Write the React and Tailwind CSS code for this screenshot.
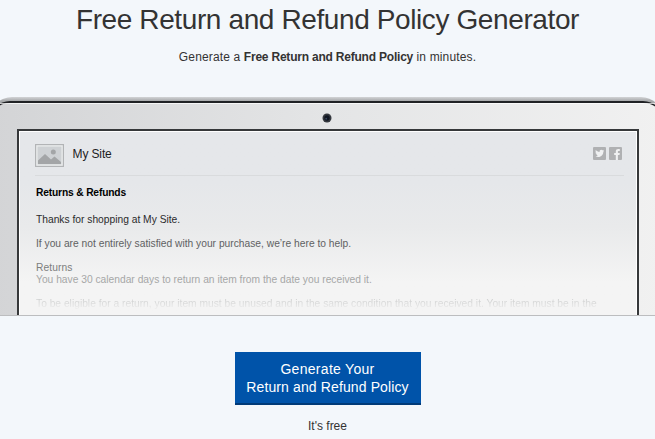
const policy = [
	{
		text: "Returns & Refunds",
		className: "mt-[10px] font-bold text-black tracking-[-0.17px]",
	},
	{
		text: "Thanks for shopping at My Site.",
		className: "mt-[14px] text-[#2b2b2c]",
	},
	{
		text: "If you are not entirely satisfied with your purchase, we’re here to help.",
		className: "mt-[11px] text-[#606162]",
	},
	{
		text: "Returns",
		className: "mt-[11px] text-[#7c7d7d] tracking-[0.1px]",
	},
	{
		text: "You have 30 calendar days to return an item from the date you received it.",
		className: "-mt-px text-[#a6a7a7]",
	},
	{
		text: "To be eligible for a return, your item must be unused and in the same condition that you received it. Your item must be in the",
		className:
			"mt-[11px] bg-gradient-to-b from-[#cfd0d0] from-20% to-[#f0f0f0] bg-clip-text text-transparent",
	},
];

export default function App() {
	return (
		<div className="flex h-[439px] w-[655px] flex-col items-center overflow-hidden bg-[#f3f7fb] font-['Liberation_Sans',Arial,sans-serif] text-[#333]">
			<h1 className="mt-[3px] h-[34px] whitespace-nowrap text-[28px] leading-[34px] tracking-[-0.39px]">
				Free Return and Refund Policy Generator
			</h1>
			<p className="mt-3 h-4 whitespace-nowrap text-[12px] leading-4 tracking-[0.14px]">
				Generate a{" "}
				<b className="tracking-[-0.21px]">Free Return and Refund Policy</b> in
				minutes.
			</p>
			<Laptop />
			<button className="mt-9 h-[53px] w-[186px] shrink-0 border-b-2 border-[#003a78] bg-[#0053a9] text-[14px] leading-[18px] tracking-[0.12px] text-white">
				<span className="tracking-[0.3px]">Generate Your</span>
				<br />
				Return and Refund Policy
			</button>
			<p className="mt-[13px] text-[12px] leading-4">It's free</p>
		</div>
	);
}

function Laptop() {
	return (
		<div className="mt-8 h-[219px] w-full shrink-0 overflow-hidden border-b border-[#bcbdbf]">
			<div className="-mr-2 -ml-[10px] h-[260px] rounded-t-[22px] bg-gradient-to-b from-[#d2d4d6] to-[#a6a8aa] to-[4px] pt-[4px]">
				<div className="h-full rounded-t-[20px] border-t-2 border-[#202225] bg-gradient-to-r from-[#d3d4d6] via-[#e4e5e6] to-[#f1f1f1]">
					<div className="flex h-[26px] items-center justify-center border-t border-white/70 pt-[3px] pl-[1px]">
						<Camera />
					</div>
					<Screen />
				</div>
			</div>
		</div>
	);
}

function Camera() {
	return (
		<svg className="h-[10px] w-[10px]" viewBox="0 0 10 10">
			<circle cx="5" cy="5" r="4.5" fill="#34383e" />
			<circle cx="5" cy="5" r="2.7" fill="#101622" />
			<circle cx="4.2" cy="5.7" r="0.9" fill="#39495f" />
		</svg>
	);
}

function Screen() {
	return (
		<div className="mr-6 ml-[27px] h-[230px] border-2 border-[#36383a]">
			<div className="h-full border border-white bg-gradient-to-b from-[#e5e7ea] from-[50px] via-[#e9eaeb] via-[95px] to-[#f4f4f4] to-[150px] pr-3 pl-[15px]">
				<header className="flex h-11 items-center border-b border-[#d9dbdd] pt-[3px]">
					<Picture />
					<span className="ml-[8.5px] -mt-[3px] text-[12px] tracking-[-0.12px] text-[#1d1d1e]">
						My Site
					</span>
					<div className="-mt-[4px] mr-[2px] ml-auto flex gap-[3px]">
						<Twitter />
						<Facebook />
					</div>
				</header>
				<div className="pl-[1px] text-[10.25px] leading-[13px] whitespace-nowrap">
					{policy.map(line => (
						<p key={line.text} className={`w-fit ${line.className}`}>
							{line.text}
						</p>
					))}
				</div>
			</div>
		</div>
	);
}

function Picture() {
	return (
		<svg className="h-[23px] w-[29px]" viewBox="0 0 29 23">
			<rect x="0.6" y="0.6" width="27.800" height="21.800" fill="#eceeef" stroke="#b2b4b6" strokeWidth="1.200" />
			<rect x="2.500" y="2.500" width="24" height="18" fill="#ced1d4" />
			<path d="M3 20v-3.500l7-6.500 6 5.500 3.500-3L26 18v2z" fill="#a3a5a7" />
			<circle cx="18.300" cy="8" r="2.500" fill="#a3a5a7" />
		</svg>
	);
}

function Twitter() {
	return (
		<svg className="h-[13px] w-[13px]" viewBox="0 0 13 13">
			<rect width="13" height="13" rx="1" fill="#b0b1b3" />
			<path
				d="M2.200 9.100c1 .7 2 .9 3 .9 3.400 0 5.200-2.800 5.100-5.300l.9-1-1 .2.700-1-1.200.4C8.300 2 6.300 3 6.600 4.900 5 4.800 3.700 4.100 2.800 3c-.5 1-.2 1.900.5 2.500l-.8-.2c0 .9.600 1.600 1.400 1.900l-.7.1c.3.700.9 1.100 1.600 1.200-.7.500-1.500.7-2.600.6z"
				fill="#f0f1f2"
			/>
		</svg>
	);
}

function Facebook() {
	return (
		<svg className="h-[13px] w-[13px]" viewBox="0 0 13 13">
			<rect width="13" height="13" rx="1" fill="#b0b1b3" />
			<path
				d="M6.800 13V8H5.200V6h1.600V4.500C6.800 2.800 7.800 2 9.300 2h1.500v1.900H9.700c-.7 0-.8.3-.8.9V6h1.900l-.3 2H8.900v5z"
				fill="#f0f1f2"
			/>
		</svg>
	);
}
